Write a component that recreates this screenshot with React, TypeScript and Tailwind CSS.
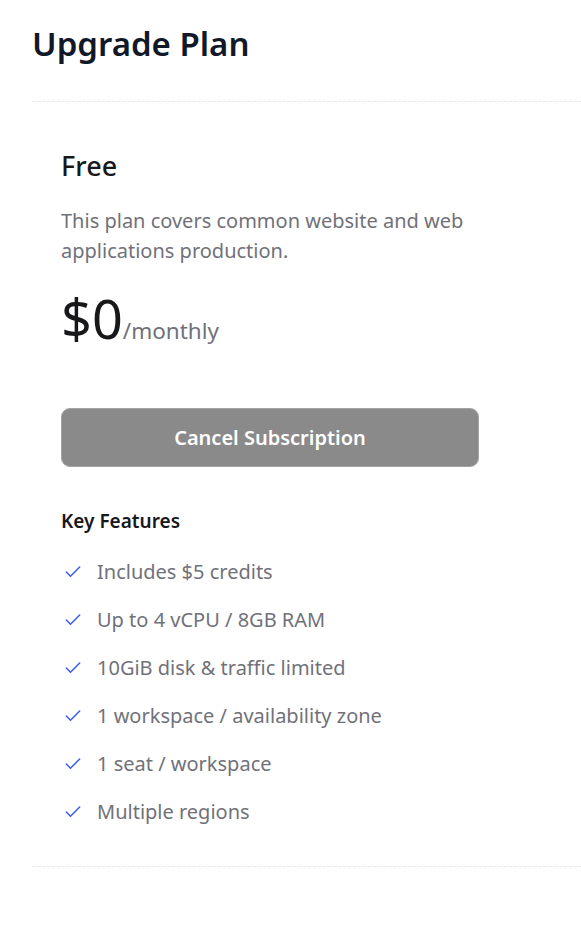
import React from "react";

const features = [
  "Includes $5 credits",
  "Up to 4 vCPU / 8GB RAM",
  "10GiB disk & traffic limited",
  "1 workspace / availability zone",
  "1 seat / workspace",
  "Multiple regions",
];

function CheckIcon() {
  return (
    <svg width="20" height="20" viewBox="0 0 24 24" fill="none" stroke="#3b5bf0" strokeWidth="1.8" strokeLinecap="round" strokeLinejoin="round">
      <path d="M20 6 9 17l-5-5" />
    </svg>
  );
}

export default function App() {
  return (
    <div className="min-h-[937px] w-[581px] overflow-hidden bg-white pl-8 pt-[22px]" style={{ fontFamily: '"Noto Sans", "Open Sans", sans-serif' }}>
      <h1 className="text-[33px] font-semibold leading-[44px] text-[#111827]">Upgrade Plan</h1>
      <div className="mt-[35px] w-[560px] border-y border-dashed border-[#e5e7eb] pl-[29px] pt-[46px] pb-[30px]">
        <h2 className="text-[27px] font-medium leading-[36px] text-[#18181b]">Free</h2>
        <p className="mt-[22px] w-[430px] text-[20px] leading-[30px] text-[#71717a]">
          This plan covers common website and web applications production.
        </p>
        <div className="mt-[20px] flex items-baseline">
          <span className="text-[54px] leading-[64px] text-[#18181b]">$0</span>
          <span className="text-[22.5px] text-[#71717a]">/monthly</span>
        </div>
        <button className="mt-[58px] flex h-[59px] w-[418px] items-center justify-center rounded-[9px] border border-[#a3a3a3] bg-[#8a8a8b] text-[20px] font-semibold text-white">
          Cancel Subscription
        </button>
        <h3 className="mt-[40px] text-[19px] font-semibold leading-[28px] text-[#18181b]">Key Features</h3>
        <ul className="mt-[13px] flex flex-col">
          {features.map((f) => (
            <li key={f} className="flex h-[48px] items-center gap-[14px] pl-[2px] text-[20px] text-[#71717a]">
              <CheckIcon />
              <span>{f}</span>
            </li>
          ))}
        </ul>
      </div>
    </div>
  );
}
